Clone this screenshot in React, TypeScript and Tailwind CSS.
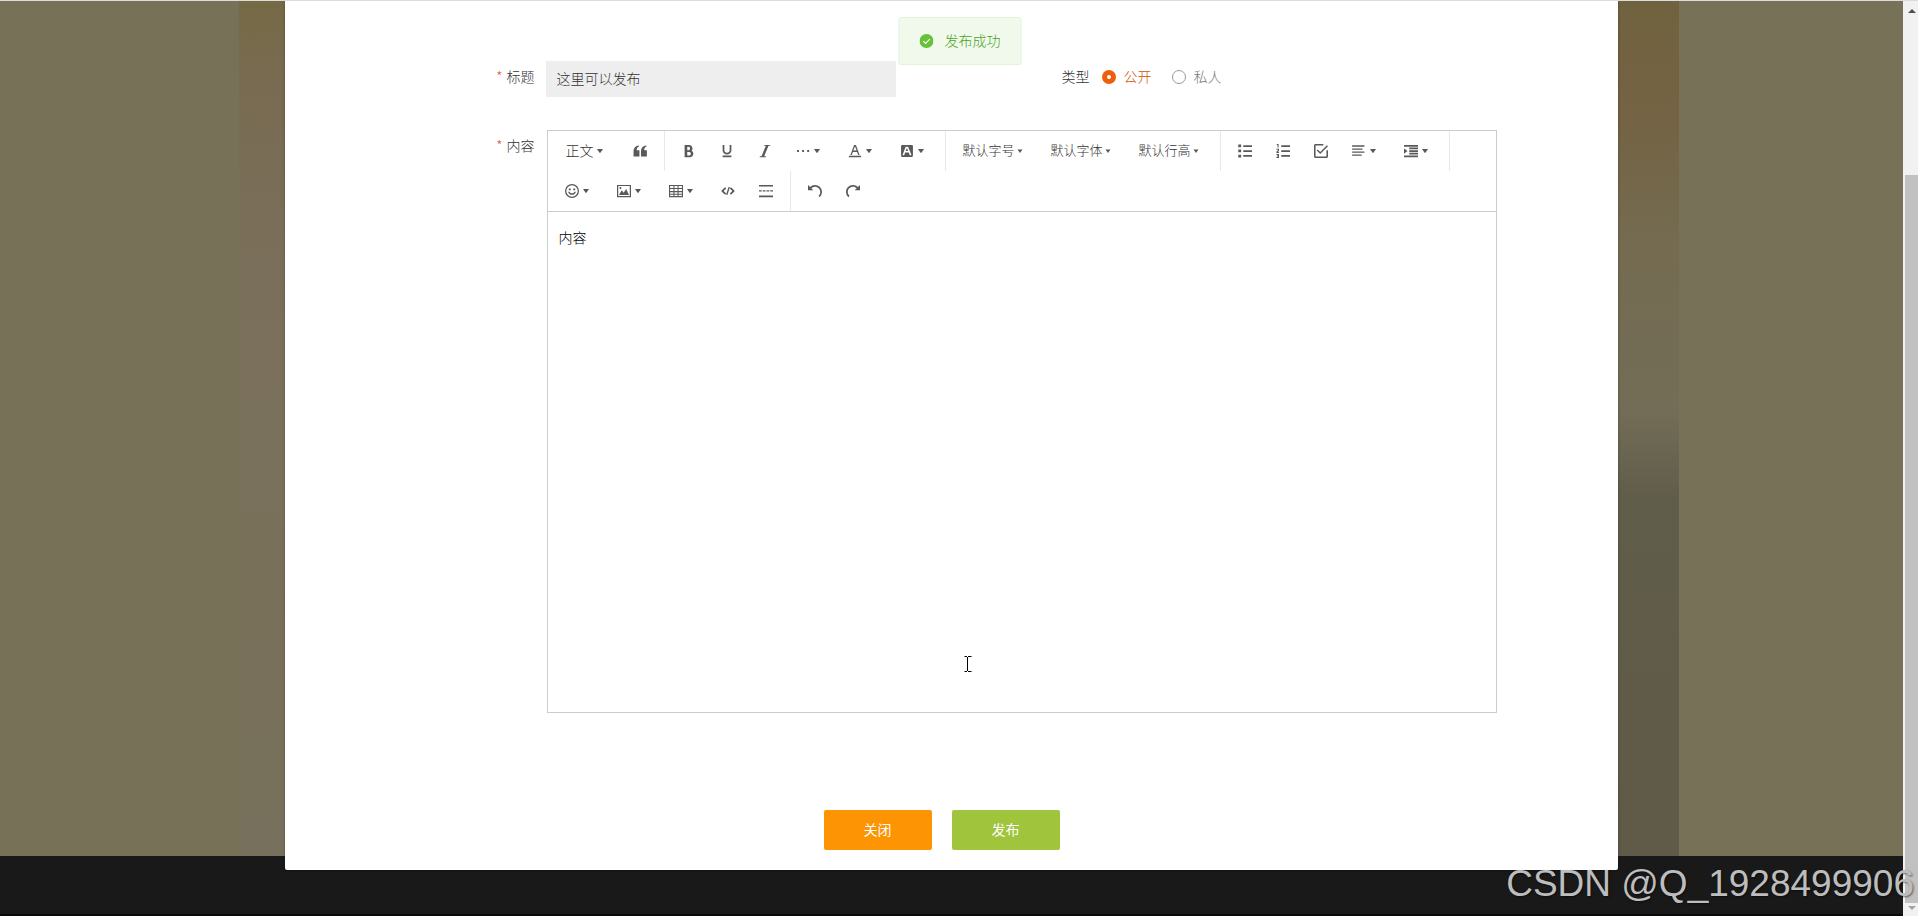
import type { ReactNode } from "react";

const CARET =
  "M498.7 655.8l-197.6-268c-8.1-10.9-0.3-26.4 13.3-26.4h395.2c13.6 0 21.4 15.4 13.3 26.4l-197.6 268c-6.6 9-20 9-26.6 0z";

const ICONS = {
  quote:
    "M440 110v70c-110 40-165 130-170 270h200v460H40V520C40 290 175 130 440 110zM984 110v70c-110 40-165 130-170 270h200v460H584V520c0-230 135-390 400-410z",
  bold: "M707.872 484.64A254.88 254.88 0 0 0 768 320c0-141.152-114.848-256-256-256H192v896h384c141.152 0 256-114.848 256-256a256.096 256.096 0 0 0-124.128-219.36zM384 192h101.504c55.968 0 101.504 57.408 101.504 128s-45.536 128-101.504 128H384V192z m159.008 640H384v-256h159.008c58.464 0 106.016 57.408 106.016 128s-47.552 128-106.016 128z",
  underline:
    "M704 64l128 0 0 416c0 159.072-143.264 288-320 288s-320-128.928-320-288l0-416 128 0 0 416c0 40.16 18.24 78.688 51.36 108.512 36.896 33.216 86.848 51.488 140.64 51.488s103.744-18.304 140.64-51.488c33.12-29.792 51.36-68.352 51.36-108.512l0-416zM192 832l640 0 0 128-640 0z",
  italic: "M896 64v64h-128L448 896h128v64H128v-64h128L576 128h-128V64z",
  more: "M80 440h140v150H80zM450 440h140v150H450zM820 440h140v150H820z",
  color:
    "M64 864h896v96H64zM360.58 576h302.85l81.53 224h102.16L579.24 64H444.77L176.89 800h102.16l81.53-224zM512 159.96L628.49 480H395.52L512 159.96z",
  bgColor:
    "M510.030769 315.076923l84.676923 196.923077h-177.230769l76.8-196.923077h15.753846zM945.230769 157.538462v708.923076c0 43.323077-35.446154 78.769231-78.769231 78.769231H157.538462c-43.323077 0-78.769231-35.446154-78.769231-78.769231V157.538462c0-43.323077 35.446154-78.769231 78.769231-78.769231h708.923076c43.323077 0 78.769231 35.446154 78.769231 78.769231z m-108.307692 643.938461L600.615385 216.615385c-5.907692-11.815385-15.753846-19.692308-29.538462-19.692308h-139.815385c-11.815385 0-23.630769 7.876923-27.56923 19.692308l-216.615385 584.861538c-3.938462 11.815385 3.938462 25.6 17.723077 25.6h80.738462c11.815385 0 23.630769-9.846154 27.56923-21.661538l63.015385-175.261539h263.876923l68.923077 175.261539c3.938462 11.815385 15.753846 21.661538 27.569231 21.661538h80.738461c13.784615 0 23.630769-13.784615 19.692308-25.6z",
  bullets:
    "M384 96h640v128H384zM384 448h640v128H384zM384 808h640v128H384zM20 30h210v210H20zM20 400h210v210H20zM20 780h210v210H20z",
  numbers:
    "M384 96h640v128H384zM384 448h640v128H384zM384 808h640v128H384zM110 0h80v260h-80V80H50V20zM30 350h190v170l-90 70h90v70H30V550l110-80v-50H30zM30 730h190v294H30v-66h110v-52H60v-60h80v-50H30z",
  todo: "M278.755556 403.911111l-79.644445 79.644445L455.111111 739.555556l568.888889-568.888889-79.644444-79.644445L455.111111 580.266667l-176.355555-176.355556zM910.222222 910.222222H113.777778V113.777778h568.888889V0H113.777778C51.2 0 0 51.2 0 113.777778v796.444444c0 62.577778 51.2 113.777778 113.777778 113.777778h796.444444c62.577778 0 113.777778-51.2 113.777778-113.777778V455.111111h-113.777778v455.111111z",
  align:
    "M10 100h900v100H10zM10 320h760v100H10zM10 540h900v100H10zM10 760h700v100H10z",
  indent:
    "M0 64h1024v128H0zM384 256h640v128H384zM384 448h640v128H384zM384 640h640v128H384zM0 832h1024v128H0zM0 320l256 192L0 704z",
  emoji:
    "M512 0a512 512 0 1 0 0 1024A512 512 0 0 0 512 0zM512 96a416 416 0 1 1 0 832 416 416 0 0 1 0-832zM280 330h140v120H280zM604 330h140v120H604zM230 560h110c25 75 85 120 172 120s147-45 172-120h110c-25 145-135 230-282 230s-257-85-282-230z",
  image:
    "M0 64h1024v896H0zM90 150v720h844V150zM150 800l190-350 150 190 180-270 210 430zM250 220a75 75 0 1 1 0 150 75 75 0 0 1 0-150z",
  table:
    "M0 64h1024v896H0zM80 144v150h244V144zM400 144v150h224V144zM700 144v150h244V144zM80 370v150h244V370zM400 370v150h224V370zM700 370v150h244V370zM80 596v110h244V596zM400 596v110h224V596zM700 596v110h244V596zM80 780v100h244V780zM400 780v100h224V780zM700 780v100h244V780z",
  code: "M300 240l80 90L190 512l190 182-80 90L40 540v-56zM724 240l-80 90 190 182-190 182 80 90 260-244v-56zM550 220l100 24-180 560-100-24z",
  divider:
    "M0 64h1024v120H0zM0 840h1024v120H0zM0 456h200v100H0zM275 456h200v100H275zM550 456h200v100H550zM824 456h200v100H824z",
  undo: "M512 64A510.272 510.272 0 0 0 149.984 213.984L0.032 64v384h384L240.512 304.48A382.784 382.784 0 0 1 512.032 192c212.064 0 384 171.936 384 384 0 114.688-50.304 217.632-130.016 288l84.672 96a510.72 510.72 0 0 0 173.344-384c0-282.784-229.216-512-512-512z",
  redo: "M0.00032 576a510.72 510.72 0 0 0 173.344 384l84.672-96A383.136 383.136 0 0 1 128.00032 576c0-212.064 171.936-384 384-384 106.048 0 202.048 42.976 271.52 112.48L640.00032 448h384V64l-149.984 149.984A510.272 510.272 0 0 0 512.00032 64C229.21632 64 0.00032 293.216 0.00032 576z",
};

type IconName = keyof typeof ICONS;

function Glyph({ d }: { d: string }) {
  return (
    <svg viewBox="0 0 1024 1024" className="size-3.5 shrink-0 fill-[#595959]" aria-hidden="true">
      <path fillRule="evenodd" d={d} />
    </svg>
  );
}

function Tool({ icon, label, menu = false }: { icon: IconName; label: string; menu?: boolean }) {
  return (
    <div className="flex h-10 p-1">
      <button type="button" aria-label={label} className="flex items-center px-2">
        <Glyph d={ICONS[icon]} />
        {menu && <Glyph d={CARET} />}
      </button>
    </div>
  );
}

function SelectTool({ text }: { text: string }) {
  return (
    <div className="flex h-10 p-1">
      <button type="button" className="flex w-20 items-center px-[7px] text-[13px] text-[#333]">
        <span className="pb-0.5 whitespace-nowrap">{text}</span>
        <svg viewBox="0 0 12 12" className="size-3 shrink-0 fill-[#595959]" aria-hidden="true">
          <path d="M3.500 4.500h5L6 8z" />
        </svg>
      </button>
    </div>
  );
}

function Separator() {
  return <div className="mx-[5px] h-10 w-px bg-[#e8e8e8]" />;
}

function Toolbar() {
  return (
    <div className="flex flex-wrap border-b border-[#ccc] px-[5px]">
      <div className="flex h-10 p-1">
        <button type="button" className="flex w-[60px] items-center px-2 text-sm text-[#333]">
          <span className="pb-0.5 whitespace-nowrap">正文</span>
          <Glyph d={CARET} />
        </button>
      </div>
      <Tool icon="quote" label="引用" />
      <Separator />
      <Tool icon="bold" label="粗体" />
      <Tool icon="underline" label="下划线" />
      <Tool icon="italic" label="斜体" />
      <Tool icon="more" label="更多" menu />
      <Tool icon="color" label="文字颜色" menu />
      <Tool icon="bgColor" label="背景色" menu />
      <Separator />
      <SelectTool text="默认字号" />
      <SelectTool text="默认字体" />
      <SelectTool text="默认行高" />
      <Separator />
      <Tool icon="bullets" label="无序列表" />
      <Tool icon="numbers" label="有序列表" />
      <Tool icon="todo" label="待办" />
      <Tool icon="align" label="对齐" menu />
      <Tool icon="indent" label="缩进" menu />
      <Separator />
      <Tool icon="emoji" label="表情" menu />
      <Tool icon="image" label="图片" menu />
      <Tool icon="table" label="表格" menu />
      <Tool icon="code" label="代码块" />
      <Tool icon="divider" label="分割线" />
      <Separator />
      <Tool icon="undo" label="撤销" />
      <Tool icon="redo" label="重做" />
    </div>
  );
}

const labelClass = "w-[141px] shrink-0 pr-3 text-right text-sm leading-[30px] text-[#333]";

function Required() {
  return <span className="mr-1 text-[#d9534f]">*</span>;
}

function Radio({ value, checked, children }: { value: string; checked?: boolean; children: ReactNode }) {
  return (
    <label className="flex items-center gap-2 text-sm text-[#777] has-checked:text-[#d25000]">
      <input
        type="radio"
        name="kind"
        value={value}
        defaultChecked={checked}
        className="size-3.5 appearance-none rounded-full border border-[#999] bg-white checked:border-[5px] checked:border-[#ee5f0c]"
      />
      <span className="pb-0.5">{children}</span>
    </label>
  );
}

function Backdrop() {
  return (
    <div className="absolute inset-0 flex flex-col">
      <div className="flex flex-1 justify-center bg-[#777158] pl-[15px]">
        <div className="flex w-full max-w-[1440px] justify-between">
          <div className="w-12 bg-[linear-gradient(to_bottom,#766a45_0%,#786b50_8%,#7a6e59_25%,#7a715c_50%,#787059_70%,#77705c_100%)]" />
          <div className="w-16 bg-[linear-gradient(to_bottom,#71623f_0%,#746344_14%,#746b50_28%,#736d57_48%,#615d4b_58%,#605a48_100%)]" />
        </div>
      </div>
      <footer className="h-[60px] border-b-2 border-[#0c0809] bg-[#191919]" />
    </div>
  );
}

function Scrollbar() {
  return (
    <div className="flex w-[15px] shrink-0 flex-col bg-[#f1f1f1]" aria-hidden="true">
      <div className="flex h-[17px] items-center justify-center pt-1 pl-0.5">
        <svg viewBox="0 0 8 4" className="h-1 w-2 fill-[#505050]">
          <path d="M0 4L4 0l4 4z" />
        </svg>
      </div>
      <div className="flex-[158]" />
      <div className="ml-0.5 flex-[728] bg-[#c1c1c1]" />
      <div className="flex h-[13px] items-center justify-center pb-1 pl-0.5">
        <svg viewBox="0 0 8 4" className="h-1 w-2 fill-[#a3a3a3]">
          <path d="M0 0l4 4 4-4z" />
        </svg>
      </div>
    </div>
  );
}

export default function App() {
  return (
    <div className="relative flex min-h-screen overflow-hidden font-['Noto_Sans_CJK_SC',sans-serif] font-light">
      <main className="relative flex-1 pb-[46px]">
        <Backdrop />
        <section className="relative mx-auto w-[70%] rounded-b-xs bg-white px-[120px] pt-[61px] pb-5 shadow-[0_1px_3px_rgba(0,0,0,0.3)]">
          <form>
            <div className="grid grid-cols-2 gap-x-[18px] gap-y-[33px]">
              <div className="flex items-start">
                <label htmlFor="title" className={labelClass}>
                  <Required />
                  标题
                </label>
                <input
                  id="title"
                  readOnly
                  defaultValue="这里可以发布"
                  className="h-9 w-[350px] bg-[#eee] px-2.5 pb-0.5 text-sm text-[#333] outline-none"
                />
              </div>
              <div className="flex items-start" role="radiogroup" aria-labelledby="kind-label">
                <span id="kind-label" className={labelClass}>
                  类型
                </span>
                <div className="flex h-8 items-center gap-5">
                  <Radio value="public" checked>
                    公开
                  </Radio>
                  <Radio value="private">私人</Radio>
                </div>
              </div>
              <div className="col-span-2 flex items-start">
                <label htmlFor="content" className={labelClass}>
                  <Required />
                  内容
                </label>
                <div className="min-w-0 flex-1 px-px">
                  <div className="border border-[#ccc]">
                    <Toolbar />
                    <textarea
                      id="content"
                      defaultValue="内容"
                      className="block h-[500px] w-full resize-none px-2.5 py-[15px] text-sm leading-5 text-black outline-none"
                    />
                  </div>
                </div>
              </div>
            </div>
            <div className="mt-[97px] flex justify-center gap-5 pr-5">
              <button type="button" className="h-10 w-[108px] rounded-xs bg-[#fc9403] pb-0.5 text-sm font-normal text-white">
                关闭
              </button>
              <button type="button" className="h-10 w-[108px] rounded-xs bg-[#a0c43c] pb-0.5 text-sm font-normal text-white">
                发布
              </button>
            </div>
          </form>
        </section>
        <svg
          viewBox="0 0 8 16"
          className="absolute top-[656px] left-[964px] h-4 w-2 fill-none stroke-black"
          aria-hidden="true"
        >
          <path d="M.5 .5h2.500M4 .5h3.500M.5 15.500h2.500M4 15.500h3.500M3.500 1v14" />
        </svg>
      </main>
      <Scrollbar />
      <div className="absolute inset-x-0 top-0 h-px bg-[#dcdcdc]" />
      <div
        role="status"
        className="absolute top-[17px] left-1/2 ml-px flex h-12 -translate-x-1/2 items-center gap-[11px] rounded-xs border border-[#e1f3d8] bg-[#f0f9eb] px-5 text-sm whitespace-nowrap text-[#48a31c]"
      >
        <svg viewBox="0 0 14 14" className="size-3.5" aria-hidden="true">
          <circle cx="7" cy="7" r="7" fill="#67c23a" />
          <path d="M3.800 7.200l2.300 2.300 4.200-4.300" fill="none" stroke="#fff" strokeWidth="1.200" />
        </svg>
        <span className="pb-0.5">发布成功</span>
      </div>
      <div className="absolute right-1 bottom-[11px] font-['Liberation_Sans',sans-serif] text-[37px] leading-[42px] font-normal whitespace-nowrap text-[#bdbdbd] [text-shadow:1px_1px_2px_rgba(0,0,0,0.5)]">
        CSDN @Q_1928499906
      </div>
    </div>
  );
}
